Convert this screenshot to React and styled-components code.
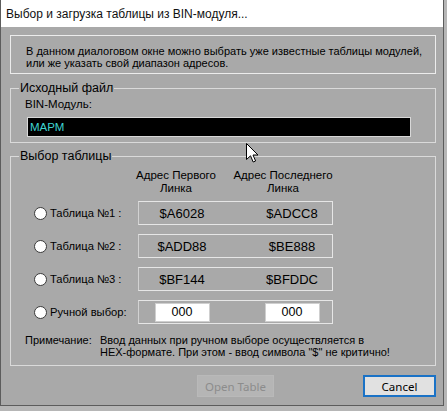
import React from 'react';
import styled, { createGlobalStyle } from 'styled-components';

const Global = createGlobalStyle`
  html, body { margin: 0; padding: 0; background: #b6b6b6; }
  body { width: 447px; height: 411px; overflow: hidden; font-family: "Liberation Sans", Arial, sans-serif; color: #000; }
`;

const Screen = styled.div`
  position: relative;
  width: 447px;
  height: 411px;
  background: #b6b6b6;
`;

const Window = styled.div`
  width: 444px;
  height: 406px;
  box-sizing: border-box;
  border-left: 1px solid #5c5c5c;
  border-right: 1px solid #5c5c5c;
  border-bottom: 1px solid #5c5c5c;
  background: #a9a9a9;
  display: flex;
  flex-direction: column;
  overflow: hidden;
`;

const TitleBar = styled.div`
  height: 27px;
  flex: none;
  background: #ffffff;
  display: flex;
  align-items: center;
  padding-left: 5px;
  font-family: "Liberation Sans", Arial, sans-serif;
  font-size: 12px;
  color: #111;
`;

const Body = styled.div`
  flex: 1;
  display: flex;
  flex-direction: column;
  padding: 8px 7px 6px 9px;
  font-size: 11px;
`;

const InfoPanel = styled.div`
  border: 1px solid #ececec;
  padding: 10px 0 4px 15px;
  line-height: 11.5px;
  white-space: nowrap;
`;

const Group = styled.fieldset`
  margin: ${p => p.$mt}px 0 0 0;
  border: 1px solid #dadada;
  padding: 0 8px ${p => p.$pb}px 8px;
  min-width: 0;
`;

const Legend = styled.legend`
  padding: 0 1px;
  font-size: 12.5px;
  line-height: 14px;
`;

const FieldLabel = styled.div`
  margin: 3px 0 0 6px;
  line-height: 12px;
  font-size: 11.5px;
`;

const BlackInput = styled.div`
  margin: 7px 0 0 8px;
  width: 384px;
  height: 20px;
  box-sizing: border-box;
  background: #000;
  border: 1px solid #d8d8d8;
  color: #3fd3d0;
  padding-left: 2px;
  display: flex;
  align-items: center;
  font-size: 11.5px;
`;

const Headers = styled.div`
  margin: 6px 0 6px 15px;
  display: grid;
  grid-template-columns: 104px auto;
`;

const HeaderCols = styled.div`
  margin-left: -12px;
  display: grid;
  grid-template-columns: 100px 100px;
  column-gap: 7px;
  text-align: center;
  line-height: 13px;
  font-size: 11.5px;
  white-space: nowrap;
`;

const Rows = styled.div`
  display: flex;
  flex-direction: column;
  gap: 9px;
  margin-left: 15px;
`;

const Row = styled.div`
  display: grid;
  grid-template-columns: 104px 195px;
  align-items: center;
`;

const RadioLabel = styled.label`
  display: flex;
  align-items: center;
  gap: 3px;
  font-size: 11.2px;
  white-space: nowrap;
`;

const Radio = styled.span`
  width: 13px;
  height: 13px;
  box-sizing: border-box;
  border-radius: 50%;
  background: #fff;
  border: 1px solid #3a3a3a;
  flex: none;
`;

const AddrBox = styled.div`
  height: 24px;
  box-sizing: border-box;
  border: 1px solid #e6e6e6;
  border-left-color: #d2d2d2;
  display: grid;
  grid-template-columns: 70px 70px;
  column-gap: 40px;
  padding-left: 8px;
  align-items: center;
  justify-items: center;
  font-size: 13px;
  white-space: nowrap;
`;

const HexInput = styled.div`
  width: 55px;
  height: 19px;
  box-sizing: border-box;
  background: #fff;
  border: 1px solid #cfcfcf;
  display: flex;
  align-items: center;
  justify-content: center;
  font-size: 12.5px;
`;

const Note = styled.div`
  margin: 10px 0 0 6px;
  display: grid;
  grid-template-columns: 75px 1fr;
  line-height: 12px;
  white-space: nowrap;
`;

const Buttons = styled.div`
  margin-top: 9px;
  display: flex;
  justify-content: flex-end;
  gap: 89px;
`;

const Button = styled.button`
  height: 22px;
  width: ${p => p.$w}px;
  box-sizing: border-box;
  padding: 0;
  font-family: "Noto Sans", "Open Sans", sans-serif;
  font-size: 11.5px;
  background: ${p => (p.$primary ? '#e1e1e1' : '#b5b5b5')};
  color: ${p => (p.$primary ? '#000' : '#8c8c8c')};
  border: ${p => (p.$primary ? '2px solid #1a72c6' : '1px solid #b9b9b9')};
`;

const Cursor = styled.svg`
  position: absolute;
  left: 246px;
  top: 143px;
`;

const rows = [
  { label: 'Таблица №1 :', a: '$A6028', b: '$ADCC8' },
  { label: 'Таблица №2 :', a: '$ADD88', b: '$BE888' },
  { label: 'Таблица №3 :', a: '$BF144', b: '$BFDDC' },
];

export default function App() {
  return (
    <Screen>
      <Global />
      <Window>
        <TitleBar>Выбор и загрузка таблицы из BIN-модуля...</TitleBar>
        <Body>
          <InfoPanel>
            В данном диалоговом окне можно выбрать уже известные таблицы модулей,
            <br />
            или же указать свой диапазон адресов.
          </InfoPanel>
          <Group $mt={7} $pb={5}>
            <Legend>Исходный файл</Legend>
            <FieldLabel>BIN-Модуль:</FieldLabel>
            <BlackInput>МАРМ</BlackInput>
          </Group>
          <Group $mt={6} $pb={7}>
            <Legend>Выбор таблицы</Legend>
            <Headers>
              <span />
              <HeaderCols>
                <span>Адрес Первого<br />Линка</span>
                <span>Адрес Последнего<br />Линка</span>
              </HeaderCols>
            </Headers>
            <Rows>
              {rows.map(r => (
                <Row key={r.label}>
                  <RadioLabel><Radio />{r.label}</RadioLabel>
                  <AddrBox><span>{r.a}</span><span>{r.b}</span></AddrBox>
                </Row>
              ))}
              <Row>
                <RadioLabel><Radio />Ручной выбор:</RadioLabel>
                <AddrBox><HexInput>000</HexInput><HexInput>000</HexInput></AddrBox>
              </Row>
            </Rows>
            <Note>
              <span>Примечание:</span>
              <span>Ввод данных при ручном выборе осуществляется в<br />HEX-формате. При этом - ввод символа "$" не критично!</span>
            </Note>
          </Group>
          <Buttons>
            <Button $w={77} disabled>Open Table</Button>
            <Button $w={73} $primary>Cancel</Button>
          </Buttons>
        </Body>
      </Window>
      <Cursor width="13" height="20" viewBox="0 0 13 20">
        <path d="M0.5 0.5 L0.5 16.5 L4.5 12.8 L7.2 19 L9.6 18 L7 12 L12 12 Z" fill="#fff" stroke="#000" strokeWidth="1" strokeLinejoin="round" />
      </Cursor>
    </Screen>
  );
}
